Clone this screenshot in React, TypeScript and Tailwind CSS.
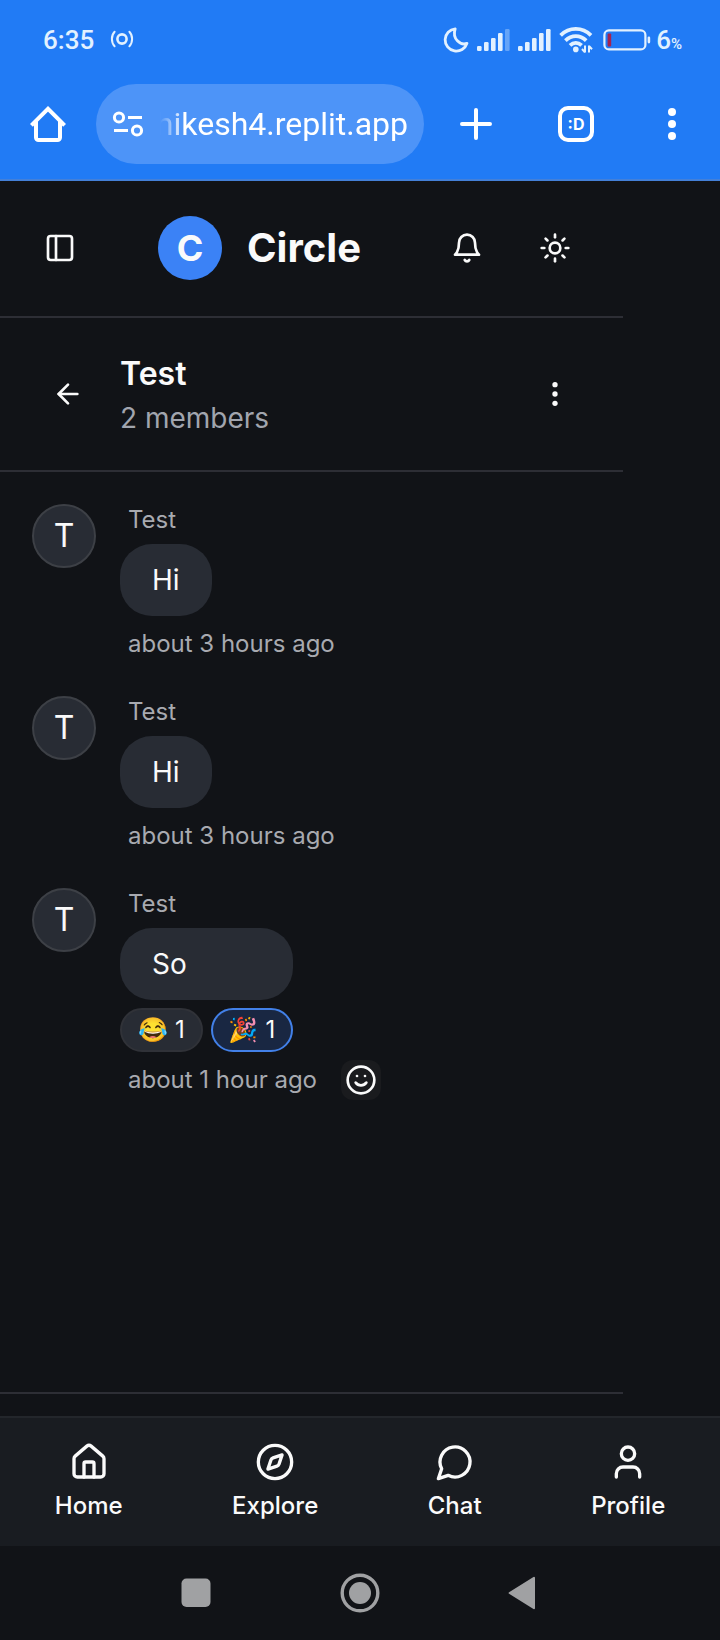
import React from "react";
import { ArrowLeft, House, PanelLeft, Smile, Sun, User } from "lucide-react";

const messages = [
  { id: 1, author: "Test", text: "Hi", time: "about 3 hours ago", reactions: [] },
  { id: 2, author: "Test", text: "Hi", time: "about 3 hours ago", reactions: [] },
  {
    id: 3,
    author: "Test",
    text: "So",
    time: "about 1 hour ago",
    reactions: [
      { emoji: "😂", count: 1, mine: false },
      { emoji: "🎉", count: 1, mine: true },
    ],
  },
];

function SignalBars({ level }: { level: number }) {
  const tops = [17, 13, 9, 4, 0];
  return (
    <svg width="33" height="22" viewBox="0 0 33 22" fill="currentColor">
      {tops.map((top, i) => (
        <rect key={i} x={i * 7} y={top} width="4.6" height={22 - top} rx="1.2" opacity={i < level ? 1 : 0.35} />
      ))}
    </svg>
  );
}

function StatusBar() {
  return (
    <div className="flex h-[84px] items-start justify-between pt-6 pr-[38px] pl-[43px] font-[Roboto,sans-serif] text-[#e2f1ff]">
      <div className="flex h-8 items-center gap-4">
        <span className="text-[26px] leading-8 font-medium">6:35</span>
        <svg width="24" height="20" viewBox="0 0 24 20" fill="none" stroke="currentColor" strokeWidth="2" strokeLinecap="round">
          <circle cx="12" cy="9" r="4.6" strokeWidth="2.6" />
          <path d="M4.6 1.8C1 5.6 1 12.4 4.6 16.2M19.4 1.8C23 5.6 23 12.4 19.4 16.2" />
        </svg>
      </div>
      <div className="flex h-8 items-center">
        <svg width="26" height="27" viewBox="0 0 26 27" fill="none" stroke="currentColor" strokeWidth="2.8" strokeLinejoin="round">
          <path d="M12.2 1.8A11.2 11.2 0 1 0 24 16.4C17.5 18.8 8.8 12 12.2 1.8Z" />
        </svg>
        <span className="ml-2 flex gap-2">
          <SignalBars level={4} />
          <SignalBars level={5} />
        </span>
        <svg className="ml-2" width="34" height="26" viewBox="0 0 34 26" fill="none" stroke="currentColor" strokeWidth="3.8">
          <path d="M1.6 8.4C10.2-.2 23.4-.2 32 8.4" />
          <path d="M6.4 13.6C12.6 7.6 21 7.6 27.2 13.6" />
          <path d="M11 18.4C14.6 15 19 15 22.6 18.4" />
          <circle cx="16.8" cy="22.4" r="2.8" fill="currentColor" stroke="none" />
          <path d="M26 18.6v7M23 22l3 3.4M30 25.6v-7M30 19l3 3.2" strokeWidth="2" />
        </svg>
        <svg className="ml-[10px]" width="48" height="22" viewBox="0 0 48 22" fill="none">
          <rect x="1.4" y="1.4" width="41" height="19" rx="4.5" stroke="currentColor" strokeWidth="2.2" />
          <rect x="4.6" y="4.4" width="3.6" height="13" rx="1" fill="#a5224f" />
          <rect x="44.600" y="7.4" width="2.6" height="7" rx="1.3" fill="currentColor" />
        </svg>
        <span className="ml-[5px] flex h-8 items-baseline">
          <span className="text-[26px] leading-8 font-medium">6</span>
          <span className="text-[15px] leading-8 font-medium">%</span>
        </span>
      </div>
    </div>
  );
}

function BrowserToolbar() {
  return (
    <div className="flex h-[95px] items-start text-white">
      <button aria-label="Home page" className="flex h-20 w-24 items-center justify-center">
        <svg width="36" height="36" viewBox="0 0 36 36" fill="none" stroke="currentColor" strokeWidth="4">
          <path d="M1.4 19.4 18 2.8l16.6 16.6" />
          <path d="M6 15v16.5A2.5 2.5 0 0 0 8.500 34h19a2.500 2.500 0 0 0 2.500-2.500V15" />
        </svg>
      </button>
      <div className="flex h-20 min-w-0 flex-1 items-center rounded-full bg-[#4d94f8] pr-4 pl-4">
        <button aria-label="Site settings" className="flex h-12 w-8 shrink-0 items-center justify-center">
          <svg width="32" height="26" viewBox="0 0 32 26" fill="none" stroke="currentColor" strokeWidth="3">
            <circle cx="7" cy="6.500" r="4.600" />
            <path d="M16 6.500h14M2 19.500h14" />
            <circle cx="25" cy="19.500" r="4.600" />
          </svg>
        </button>
        <button
          aria-label="Edit address"
          className="ml-1 flex min-w-0 flex-1 justify-end [mask-image:linear-gradient(to_right,transparent_12px,black_36px)]"
        >
          <span className="font-[Roboto,sans-serif] text-[32px] leading-10 whitespace-nowrap">hikesh4.replit.app</span>
        </button>
      </div>
      <button aria-label="New tab" className="flex h-20 w-[104px] items-center justify-center">
        <svg width="32" height="32" viewBox="0 0 32 32" stroke="currentColor" strokeWidth="4" strokeLinecap="round">
          <path d="M16 2v28M2 16h28" />
        </svg>
      </button>
      <button aria-label="Switch tabs" className="flex h-20 w-24 items-center justify-center">
        <span className="flex size-9 items-center justify-center rounded-[10px] border-4 border-white text-base leading-5 font-bold">
          :D
        </span>
      </button>
      <button aria-label="Browser menu" className="flex h-20 w-24 items-center justify-center">
        <svg width="8" height="32" viewBox="0 0 8 32" fill="currentColor">
          <circle cx="4" cy="4" r="4" />
          <circle cx="4" cy="16" r="4" />
          <circle cx="4" cy="28" r="4" />
        </svg>
      </button>
    </div>
  );
}

function BellIcon() {
  return (
    <svg className="size-8" viewBox="0 0 24 24" fill="none" stroke="currentColor" strokeWidth="2" strokeLinecap="round" strokeLinejoin="round">
      <path d="M6 8a6 6 0 0 1 12 0c0 7 3 9 3 9H3s3-2 3-9" />
      <path d="M10.300 21a1.940 1.940 0 0 0 3.400 0" />
    </svg>
  );
}

function DotsIcon() {
  return (
    <svg className="size-8" viewBox="0 0 24 24" fill="currentColor">
      <circle cx="12" cy="5" r="2" />
      <circle cx="12" cy="12" r="2" />
      <circle cx="12" cy="19" r="2" />
    </svg>
  );
}

function CompassIcon() {
  return (
    <svg className="size-10" viewBox="0 0 24 24" fill="none" stroke="currentColor" strokeWidth="2" strokeLinecap="round" strokeLinejoin="round">
      <path d="m16.240 7.760-1.804 5.411a2 2 0 0 1-1.265 1.265L7.760 16.240l1.804-5.411a2 2 0 0 1 1.265-1.265z" />
      <circle cx="12" cy="12" r="10" />
    </svg>
  );
}

function ChatIcon() {
  return (
    <svg className="size-10" viewBox="0 0 24 24" fill="none" stroke="currentColor" strokeWidth="2" strokeLinecap="round" strokeLinejoin="round">
      <path d="M7.900 20A9 9 0 1 0 4 16.100L2 22Z" />
    </svg>
  );
}

const iconButton = "flex size-[72px] items-center justify-center";

function AppHeader() {
  return (
    <header className="flex h-[137px] items-start justify-between border-b-2 border-[#2d2e35] px-8 pt-[31px]">
      <button aria-label="Toggle sidebar" className="flex h-[72px] w-14 items-center justify-center">
        <PanelLeft className="size-8" />
      </button>
      <div className="flex h-[72px] items-center gap-[25px]">
        <span className="flex size-16 items-center justify-center rounded-full bg-[#3b82f6] text-4xl font-bold">C</span>
        <h1 className="text-[40px] leading-[56px] font-bold">Circle</h1>
      </div>
      <div className="flex gap-4">
        <button aria-label="Notifications" className={iconButton}>
          <BellIcon />
        </button>
        <button aria-label="Toggle theme" className={iconButton}>
          <Sun className="size-8" />
        </button>
      </div>
    </header>
  );
}

function ChatHeader() {
  return (
    <div className="flex items-center gap-4 border-b-2 border-[#2d2e35] p-8">
      <button aria-label="Back" className={iconButton}>
        <ArrowLeft className="size-8" />
      </button>
      <div className="flex-1">
        <h2 className="text-[32px] leading-[48px] font-semibold">Test</h2>
        <p className="text-[28px] leading-10 text-[#a1a5ae]">2 members</p>
      </div>
      <button aria-label="Chat options" className={iconButton}>
        <DotsIcon />
      </button>
    </div>
  );
}

function Message({ message }: { message: (typeof messages)[number] }) {
  return (
    <li className="flex items-start gap-6">
      <span className="flex size-16 shrink-0 items-center justify-center rounded-full border-2 border-[#3d4046] bg-[#282c34] text-[32px] leading-[48px]">
        T
      </span>
      <div className="flex flex-col items-start gap-2">
        <span className="px-2 text-2xl leading-8 text-[#a8aab0]">{message.author}</span>
        <div className="flex flex-col gap-2">
          <p className="rounded-[32px] bg-[#282c34] px-8 py-4 text-[28px] leading-10">{message.text}</p>
          {message.reactions.length > 0 && (
            <div className="flex gap-2">
              {message.reactions.map((r) => (
                <button
                  key={r.emoji}
                  aria-pressed={r.mine}
                  className={
                    r.mine
                      ? "flex items-center gap-[7px] rounded-full border-2 border-[#4280e8] bg-[#192742] px-4 py-1 text-2xl leading-8"
                      : "flex items-center gap-[7px] rounded-full border-2 border-[#303238] bg-[#282c34] px-4 py-1 text-2xl leading-8"
                  }
                >
                  <span>{r.emoji}</span>
                  <span>{r.count}</span>
                </button>
              ))}
            </div>
          )}
        </div>
        <div className="flex h-10 items-center gap-4">
          <span className="px-2 text-2xl leading-8 text-[#a8aab0]">{message.time}</span>
          {message.reactions.length > 0 && (
            <button aria-label="Add reaction" className="flex size-10 items-center justify-center rounded-xl bg-[#1a1b1e]">
              <Smile className="size-8" />
            </button>
          )}
        </div>
      </div>
    </li>
  );
}

const tabs = [
  { label: "Home", icon: <House className="size-10" /> },
  { label: "Explore", icon: <CompassIcon /> },
  { label: "Chat", icon: <ChatIcon /> },
  { label: "Profile", icon: <User className="size-10" /> },
];

function TabBar() {
  return (
    <nav className="flex justify-around border-t-2 border-[#23262b] bg-[#191c21] py-6">
      {tabs.map((tab) => (
        <a key={tab.label} href="#" className="flex flex-col items-center gap-2">
          {tab.icon}
          <span className="text-2xl leading-8 font-medium">{tab.label}</span>
        </a>
      ))}
    </nav>
  );
}

function SystemBar() {
  return (
    <div className="flex h-[94px] items-center justify-center gap-[122px] text-[#a0a1a3]">
      <button aria-label="Recent apps" className="flex size-10 items-center justify-start">
        <svg width="36" height="30" viewBox="0 0 36 30" fill="currentColor">
          <rect x="3.500" y="0.500" width="29" height="28.500" rx="5" />
        </svg>
      </button>
      <button aria-label="Home screen" className="flex size-10 items-center justify-center">
        <svg width="40" height="40" viewBox="0 0 40 40" fill="none">
          <circle cx="20" cy="20" r="17.800" stroke="currentColor" strokeWidth="3.400" />
          <circle cx="20" cy="20" r="11" fill="currentColor" />
        </svg>
      </button>
      <button aria-label="System back" className="flex size-10 items-center justify-center">
        <svg width="28" height="34" viewBox="0 0 28 34" fill="currentColor" stroke="currentColor" strokeWidth="2" strokeLinejoin="round">
          <path d="M1.600 17 26 1.800v30.400Z" />
        </svg>
      </button>
    </div>
  );
}

export default function App() {
  return (
    <div className="flex min-h-screen flex-col bg-[#111317] font-[Inter,'Noto_Color_Emoji',sans-serif] text-[#fafafa]">
      <div className="border-b-2 border-[#4480d8] bg-[#217bf5]">
        <StatusBar />
        <BrowserToolbar />
      </div>
      <main className="mr-[97px] flex flex-1 flex-col">
        <AppHeader />
        <ChatHeader />
        <ul className="flex flex-1 flex-col gap-8 p-8">
          {messages.map((m) => (
            <Message key={m.id} message={m} />
          ))}
        </ul>
        <div className="h-6 border-t-2 border-[#2d2e35]" />
      </main>
      <TabBar />
      <SystemBar />
    </div>
  );
}
